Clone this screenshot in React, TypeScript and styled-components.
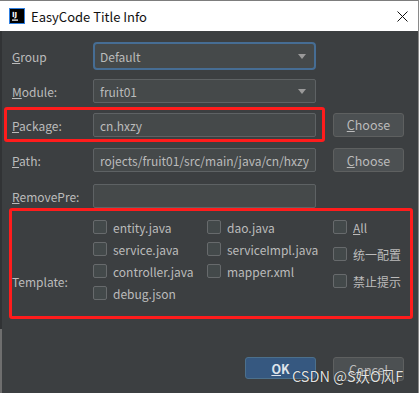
import React from 'react';
import styled, { createGlobalStyle } from 'styled-components';

const GlobalStyle = createGlobalStyle`
  html, body {
    margin: 0;
    padding: 0;
    background: #3c3f41;
  }
  * {
    box-sizing: border-box;
  }
`;

const FONT = `"Noto Sans CJK SC", "Noto Sans", "DejaVu Sans", sans-serif`;

const Window = styled.div`
  width: 419px;
  height: 393px;
  position: relative;
  overflow: hidden;
  display: flex;
  flex-direction: column;
  background: #3c3f41;
  border-top: 1px solid #7d7d7d;
  border-right: 1px solid #8a8a8a;
  font-family: ${FONT};
`;

const TitleBar = styled.div`
  height: 30px;
  flex: none;
  background: #ffffff;
  display: flex;
  align-items: center;
  padding: 0 10px 0 9px;
`;

const TitleText = styled.span`
  margin-left: 6px;
  font-size: 13px;
  color: #111;
  flex: 1;
`;

const Body = styled.div`
  flex: 1;
  display: flex;
  flex-direction: column;
  border-left: 2px solid;
  border-image: linear-gradient(to bottom, #313335 0 297px, #6f6f6f 297px) 1;
  padding-left: 2px;
  font-size: 12px;
  color: #bbbbbb;
`;

const Row = styled.div<{ $h: number; $mt: number }>`
  display: flex;
  align-items: center;
  height: ${(p) => p.$h}px;
  margin-top: ${(p) => p.$mt}px;
`;

const Label = styled.span<{ $w: number; $pl: number }>`
  width: ${(p) => p.$w}px;
  padding-left: ${(p) => p.$pl}px;
  flex: none;
  white-space: nowrap;
`;

const Field = styled.div<{ $focus?: boolean }>`
  width: 223px;
  height: 100%;
  flex: none;
  display: flex;
  align-items: center;
  padding: 0 ${(p) => (p.$focus ? 5 : 6)}px;
  background: #45494a;
  border: ${(p) => (p.$focus ? '2px solid #466d94' : '1px solid #5e6264')};
  border-radius: ${(p) => (p.$focus ? 4 : 2)}px;
  overflow: hidden;
  white-space: nowrap;
`;

const FieldText = styled.span`
  flex: 1;
`;

const ScrolledText = styled.div`
  flex: 1;
  display: flex;
  justify-content: flex-end;
  overflow: hidden;
  white-space: nowrap;
`;

const Arrow = styled.span`
  width: 0;
  height: 0;
  margin-right: 3px;
  border-left: 4.5px solid transparent;
  border-right: 4.5px solid transparent;
  border-top: 5px solid #9a9a9a;
`;

const Highlight = styled.div`
  display: flex;
  align-items: center;
  height: 35px;
  padding: 3px 6px 2px 0;
  border: 3px solid #ff1c1c;
  border-radius: 3px;
`;

const Button = styled.button<{ $primary?: boolean; $ml: number }>`
  width: 71px;
  height: ${(p) => (p.$primary ? 22 : 24)}px;
  margin-left: ${(p) => p.$ml}px;
  flex: none;
  font-family: ${FONT};
  font-size: 12.5px;
  font-weight: ${(p) => (p.$primary ? 700 : 400)};
  color: ${(p) => (p.$primary ? '#dfe4ea' : '#bbbbbb')};
  background: ${(p) => (p.$primary ? '#365880' : '#4c5052')};
  border: 1px solid ${(p) => (p.$primary ? '#4c708c' : '#5e6060')};
  border-radius: 3px;
  padding: 0;
`;

const TemplateBox = styled.div`
  display: flex;
  height: 111px;
  width: 404px;
  margin-left: 5px;
  padding-top: 5px;
  border: 3px solid #ff1c1c;
  border-radius: 3px;
`;

const TemplateLabel = styled.span`
  width: 81px;
  flex: none;
  padding-top: 55px;
  line-height: 22px;
`;

const Column = styled.div<{ $w?: number; $gap: number }>`
  display: flex;
  flex-direction: column;
  gap: ${(p) => p.$gap}px;
  width: ${(p) => (p.$w ? `${p.$w}px` : 'auto')};
  flex: ${(p) => (p.$w ? 'none' : '1')};
`;

const Check = styled.label`
  display: flex;
  align-items: center;
  height: 22px;
  gap: 6px;
  white-space: nowrap;
`;

const Box = styled.span`
  width: 14px;
  height: 14px;
  flex: none;
  background: #43494a;
  border: 1px solid #676a6c;
  border-radius: 2px;
`;

const Footer = styled.div`
  display: flex;
  justify-content: flex-end;
  margin-top: 38px;
  padding-right: 14px;
`;

const Watermark = styled.div`
  position: absolute;
  left: 292px;
  top: 365px;
  font-family: ${FONT};
  font-size: 14.5px;
  line-height: 20px;
  color: rgba(255, 255, 255, 0.88);
  text-shadow: 0 0 1px rgba(0, 0, 0, 0.9);
  white-space: nowrap;
  pointer-events: none;
`;

const AppIcon = () => (
  <svg width="16" height="16" viewBox="0 0 16 16">
    <rect x="0.5" y="0.5" width="15" height="15" fill="#000" stroke="#2f7fe0" />
    <text x="3" y="8.5" fill="#fff" fontSize="7" fontWeight="700" fontFamily="DejaVu Sans, sans-serif">
      IJ
    </text>
    <rect x="3" y="11.5" width="6" height="1.2" fill="#fff" />
  </svg>
);

const CloseIcon = () => (
  <svg width="11" height="11" viewBox="0 0 11 11">
    <path d="M0.5 0.5L10.5 10.5M10.5 0.5L0.5 10.5" stroke="#111" strokeWidth="1" />
  </svg>
);

const checks: [string, string][] = [
  ['entity.java', 'dao.java'],
  ['service.java', 'serviceImpl.java'],
  ['controller.java', 'mapper.xml'],
];

const App: React.FC = () => {
  return (
    <Window>
      <GlobalStyle />
      <TitleBar>
        <AppIcon />
        <TitleText>EasyCode Title Info</TitleText>
        <CloseIcon />
      </TitleBar>
      <Body>
        <Row $h={28} $mt={11}>
          <Label $w={89} $pl={8}>
            <u>G</u>roup
          </Label>
          <Field $focus>
            <FieldText>Default</FieldText>
            <Arrow />
          </Field>
        </Row>
        <Row $h={24} $mt={9}>
          <Label $w={89} $pl={8}>
            <u>M</u>odule:
          </Label>
          <Field>
            <FieldText>fruit01</FieldText>
            <Arrow />
          </Field>
        </Row>
        <Row $h={35} $mt={4}>
          <Highlight>
            <Label $w={86} $pl={5}>
              <u>P</u>ackage:
            </Label>
            <Field>
              <FieldText>cn.hxzy</FieldText>
            </Field>
          </Highlight>
          <Button $ml={8}>
            <u>C</u>hoose
          </Button>
        </Row>
        <Row $h={24} $mt={6}>
          <Label $w={89} $pl={8}>
            <u>P</u>ath:
          </Label>
          <Field>
            <ScrolledText>rojects/fruit01/src/main/java/cn/hxzy</ScrolledText>
          </Field>
          <Button $ml={17}>
            <u>C</u>hoose
          </Button>
        </Row>
        <Row $h={24} $mt={12}>
          <Label $w={89} $pl={8}>
            <u>R</u>emovePre:
          </Label>
          <Field />
        </Row>
        <TemplateBox>
          <TemplateLabel>Template:</TemplateLabel>
          <Column $w={114} $gap={0}>
            {checks.map((c) => (
              <Check key={c[0]}>
                <Box />
                {c[0]}
              </Check>
            ))}
            <Check>
              <Box />
              debug.json
            </Check>
          </Column>
          <Column $w={126} $gap={0}>
            {checks.map((c) => (
              <Check key={c[1]}>
                <Box />
                {c[1]}
              </Check>
            ))}
          </Column>
          <Column $gap={5}>
            <Check>
              <Box />
              <span>
                <u>A</u>ll
              </span>
            </Check>
            <Check>
              <Box />
              统一配置
            </Check>
            <Check>
              <Box />
              禁止提示
            </Check>
          </Column>
        </TemplateBox>
        <Footer>
          <Button $primary $ml={0}>
            <u>O</u>K
          </Button>
          <Button $ml={17}>Cancel</Button>
        </Footer>
      </Body>
      <Watermark>CSDN @S妖O风F</Watermark>
    </Window>
  );
};

export default App;
